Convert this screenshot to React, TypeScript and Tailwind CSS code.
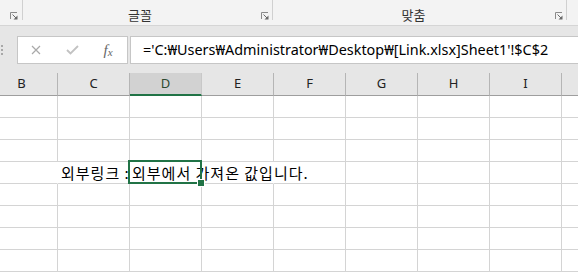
import React from "react";

const KR = { fontFamily: '"Noto Sans CJK KR", "Noto Sans", sans-serif' };
const UI = { fontFamily: '"Noto Sans", "Noto Sans CJK KR", sans-serif' };

function Launcher() {
  return (
    <svg width="8" height="8" viewBox="0 0 8 8" className="block">
      <path d="M0.5 7V0.5H7" fill="none" stroke="#8a8a8a" strokeWidth="1" />
      <path d="M2.5 2.5L6.5 6.5" stroke="#6a6a6a" strokeWidth="1" />
      <path d="M3.5 7.5H7.5V3.5Z" fill="#6a6a6a" />
    </svg>
  );
}

const cols = ["B", "C", "D", "E", "F", "G", "H", "I", ""];

export default function App() {
  return (
    <div className="w-[578px] h-[272px] overflow-hidden bg-white" style={UI}>
      {/* Ribbon */}
      <div className="h-[26px] bg-[#f3f3f3] border-b border-[#d5d5d5] flex text-[13px] text-[#333]" style={KR}>
        <div className="w-[22px] flex items-end justify-end pr-[4px] pb-[5px]">
          <Launcher />
        </div>
        <div className="w-px h-[20px] bg-[#d0d0d0]" />
        <div className="w-[249px] flex items-end">
          <div className="flex-1 text-center leading-[17px] pb-[2px]">글꼴</div>
          <div className="w-[15px] flex justify-center pb-[5px]">
            <Launcher />
          </div>
        </div>
        <div className="w-px h-[20px] bg-[#d0d0d0]" />
        <div className="w-[293px] flex items-end">
          <div className="flex-1 text-center leading-[17px] pb-[2px] pl-[2px]">맞춤</div>
          <div className="w-[14px] flex justify-center pb-[5px]">
            <Launcher />
          </div>
        </div>
        <div className="w-px h-[20px] bg-[#d0d0d0]" />
      </div>

      {/* Formula bar band */}
      <div className="h-[47px] bg-[#e6e6e6] pt-[10px] flex">
        <div className="w-[17px] h-[28px] flex flex-col gap-[2px] pt-[9px] pl-[1px]">
          <div className="w-[2px] h-[2px] bg-[#a8a8a8]" />
          <div className="w-[2px] h-[2px] bg-[#a8a8a8]" />
          <div className="w-[2px] h-[2px] bg-[#a8a8a8]" />
        </div>
        <div className="w-[111px] h-[28px] bg-white border border-[#c6c6c6] flex items-center">
          <div className="w-[36px] flex justify-center">
            <svg width="10" height="10" viewBox="0 0 10 10">
              <path d="M1 1L9 9M9 1L1 9" stroke="#a9a9a9" strokeWidth="1.2" />
            </svg>
          </div>
          <div className="w-[36px] flex justify-center">
            <svg width="13" height="10" viewBox="0 0 13 10">
              <path d="M1 5L4.5 8.5L12 1" fill="none" stroke="#c2c2c2" strokeWidth="1.8" />
            </svg>
          </div>
          <div className="w-[36px] flex justify-center items-center text-[#666] italic" style={{ fontFamily: '"Liberation Serif", serif' }}>
            <span className="text-[15px] leading-none">f</span>
            <span className="text-[11px] leading-none mt-[4px]">x</span>
          </div>
        </div>
        <div className="w-[2px]" />
        <div className="flex-1 h-[28px] bg-white border border-r-0 border-[#c6c6c6] flex items-center pl-[12px] text-[14.4px] text-black whitespace-nowrap overflow-hidden" style={UI}>
          ='C:₩Users₩Administrator₩Desktop₩[Link.xlsx]Sheet1'!$C$2
        </div>
      </div>

      {/* Column headers */}
      <div className="flex ml-[-14px] bg-[#e6e6e6]">
        {cols.map((c, i) => (
          <div
            key={i}
            className={
              c === "D"
                ? "w-[72px] shrink-0 h-[23px] bg-[#d2d2d2] border-r border-[#c8c8c8] border-b-2 border-b-[#217346] flex items-center justify-center text-[13px] text-[#2d4a30] pt-[1px]"
                : "w-[72px] shrink-0 h-[23px] border-r border-[#b5b5b5] border-b border-b-[#9e9e9e] flex items-center justify-center text-[13px] text-[#222]"
            }
          >
            {c}
          </div>
        ))}
      </div>

      {/* Grid rows */}
      {Array.from({ length: 8 }).map((_, r) => (
        <div key={r} className="flex ml-[-14px]">
          {cols.map((c, i) => {
            const isRow = r === 3;
            const hideRight = isRow && (c === "B" || c === "E");
            return (
              <div
                key={i}
                className={
                  "w-[72px] shrink-0 h-[22px] border-b border-[#d4d4d4] relative " +
                  (hideRight ? "border-r border-r-transparent" : "border-r border-r-[#d4d4d4]")
                }
              >
                {isRow && c === "C" && (
                  <div className="pl-[3px] text-[15px] leading-[21px] tracking-[1px] text-black whitespace-nowrap overflow-hidden" style={KR}>
                    외부링크 :
                  </div>
                )}
                {isRow && c === "D" && (
                  <>
                    <div className="absolute left-[2px] top-0 z-10 text-[15px] leading-[21px] tracking-[1px] text-black whitespace-nowrap" style={KR}>
                      외부에서 가져온 값입니다.
                    </div>
                    <div className="absolute left-[-2px] top-[-2px] w-[74px] h-[24px] border-2 border-[#217346] z-20" />
                    <div className="absolute left-[67px] top-[17px] w-[8px] h-[8px] bg-[#217346] border border-white z-30" />
                  </>
                )}
              </div>
            );
          })}
        </div>
      ))}
    </div>
  );
}
